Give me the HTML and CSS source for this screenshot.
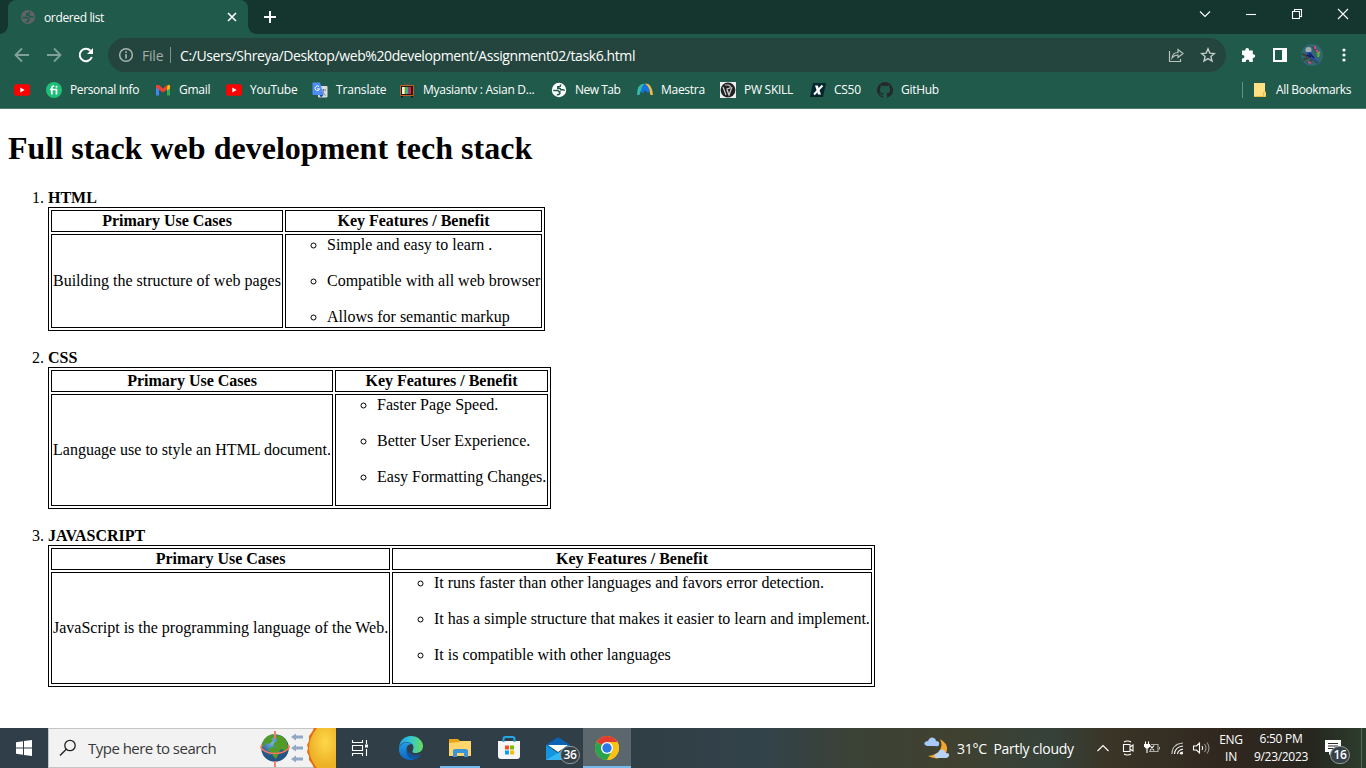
FILE: index.html
```html
<!DOCTYPE html>
<html lang="en">
<head>
<meta charset="utf-8">
<title>ordered list</title>
<link rel="stylesheet" href="styles.css">
</head>
<body>
<div class="screen">
<header class="tabs">
  <div class="tab">
    <svg class="globe" width="14" height="14" viewBox="0 0 14 14"><circle cx="7" cy="7" r="7" fill="#5f6368"/><path d="M1.200 7.500h4q1.800 0 1.800 1.300h.8v2q-1 1.200-3 1M8.500 1.500v1.300q0 1-1.500 1H5.800v1.800h2q1 0 1 1.200h2.500q1 0 1 1" fill="none" stroke="#205a4b" stroke-width="1.500"/></svg>
    <span class="tab-title">ordered list</span>
    <svg class="tab-close" width="10" height="10" viewBox="0 0 10 10"><path d="M1 1l8 8M9 1l-8 8" stroke="#fff" stroke-width="1.6"/></svg>
  </div>
  <svg class="plus" width="12" height="12" viewBox="0 0 12 12"><path d="M6 0v12M0 6h12" stroke="#fff" stroke-width="2"/></svg>
  <div class="window-buttons">
    <svg width="12" height="12" viewBox="0 0 12 12"><path d="M1 3.500l5 5 5-5"/></svg>
    <svg width="12" height="12" viewBox="0 0 12 12"><path d="M1 6.500h10"/></svg>
    <svg width="12" height="12" viewBox="0 0 12 12"><path d="M1.500 3.500h7v7h-7zM3.500 3.500v-2h7v7h-2"/></svg>
    <svg width="12" height="12" viewBox="0 0 12 12"><path d="M1 1l10 10M11 1L1 11"/></svg>
  </div>
</header>
<nav class="toolbar">
  <svg class="arrow" width="16" height="16" viewBox="0 0 16 16"><path d="M15 8H2M8 1.500L1.500 8 8 14.500"/></svg>
  <svg class="arrow" width="16" height="16" viewBox="0 0 16 16"><path d="M1 8h13M8 1.500L14.500 8 8 14.500"/></svg>
  <svg class="reload" width="16" height="16" viewBox="0 0 16 16"><path d="M13.800 10A6.200 6.200 0 1 1 12.500 3.700" fill="none" stroke="#fff" stroke-width="2"/><path d="M15 1v6H9z" fill="#fff"/></svg>
  <div class="address">
    <svg width="16" height="16" viewBox="0 0 16 16"><circle cx="8" cy="8" r="6.300" fill="none" stroke="#a9b6b1" stroke-width="1.500"/><path d="M8 7v4.500M8 4.200v1.700" stroke="#a9b6b1" stroke-width="1.600"/></svg>
    <span class="scheme">File</span><span class="bar"></span><span class="url">C:/Users/Shreya/Desktop/web%20development/Assignment02/task6.html</span>
    <svg class="share" width="16" height="16" viewBox="0 0 16 16"><path d="M1.500 4v10.500h11V12M4 11c.5-4 3-5.500 6-5.500V2.500L15 6.500 10 10.500V8C7 8 5.500 9 4 11z" fill="none" stroke="#b8c2be" stroke-width="1.200"/></svg>
    <svg class="star" width="16" height="16" viewBox="0 0 16 16"><path d="M8 1.800l1.800 4.300 4.600.4-3.500 3 1.100 4.500L8 11.600 4 14l1.100-4.500-3.500-3 4.600-.4z" fill="none" stroke="#c4ccc9" stroke-width="1.400"/></svg>
  </div>
  <svg class="puzzle" width="16" height="16" viewBox="0 0 16 16"><path fill="#fff" d="M2 3.500h3.300V2.800a1.900 1.900 0 0 1 3.800 0v.7h3.700v3.800h.6a1.800 1.800 0 0 1 0 3.600h-.6V15H9.300v-.8a1.700 1.700 0 0 0-3.500 0v.8H2v-3.600h.7a1.700 1.700 0 0 0 0-3.500H2z"/></svg>
  <svg class="panel" width="14" height="14" viewBox="0 0 14 14"><path fill="#fff" fill-rule="evenodd" d="M0 0h14v14H0zM2 2v10h7V2z"/></svg>
  <svg class="avatar" width="22" height="22" viewBox="0 0 22 22"><circle cx="11" cy="11" r="11" fill="#30686e"/><path d="M2 16l6-3 5 3 4 3M12 3l4 5M1 10l5 2M6 19l5-3" stroke="#3b4237" stroke-width="2" fill="none"/><circle cx="7.500" cy="6" r="3" fill="#a4adad"/><path d="M5 8l5 0 4 6 6 6-9-5-5-3z" fill="#2b51b5"/><path d="M8 9l5 5M6 11l4 2" stroke="#101a58" stroke-width="1.500"/><path d="M14 2v3M15 6l2 2M7 18l3 1" stroke="#c74e8a" stroke-width="2"/><path d="M16 10l3-2M17 13l1-3" stroke="#72a63e" stroke-width="2"/></svg>
  <svg class="dots" width="4" height="14" viewBox="0 0 4 14"><g fill="#fff"><circle cx="2" cy="2" r="1.600"/><circle cx="2" cy="7" r="1.600"/><circle cx="2" cy="12" r="1.600"/></g></svg>
</nav>
<nav class="bookmarks">
  <span class="mark"><svg width="16" height="16" viewBox="0 0 16 16"><rect y="2.300" width="16" height="11.400" rx="2.500" fill="#f00"/><path d="M6.300 5.500v5l4.300-2.500z" fill="#fff"/></svg></span>
  <span class="mark"><svg width="16" height="16" viewBox="0 0 16 16"><circle cx="8" cy="8" r="8" fill="#1fbf77"/><path d="M5.800 12.500V6q0-2 2.400-2M4 7.500h6.500v5" fill="none" stroke="#fff" stroke-width="1.700"/><circle cx="10.500" cy="4.700" r="1" fill="#fff"/></svg><b class="personal">Personal Info</b></span>
  <span class="mark"><svg width="16" height="16" viewBox="0 0 16 16"><path d="M1 4v9.500h3V7z" fill="#4285f4"/><path d="M12 7v6.500h3V4z" fill="#34a853"/><path d="M1 3l3 0 4 3.500L12 3l1.500 0v3.500L8 10.500 1 5.500z" fill="#ea4335"/><path d="M12 4.500L14 2.500l1 1v3l-3 2z" fill="#fbbc04"/></svg><b>Gmail</b></span>
  <span class="mark"><svg width="16" height="16" viewBox="0 0 16 16"><rect y="2.300" width="16" height="11.400" rx="2.500" fill="#f00"/><path d="M6.300 5.500v5l4.300-2.500z" fill="#fff"/></svg><b>YouTube</b></span>
  <span class="mark"><svg width="16" height="16" viewBox="0 0 16 16"><rect x="6" y="4" width="9.500" height="11.500" rx="1" fill="#d9dcdf"/><path d="M9 8h5M11.500 7v1q0 3-2.500 5M10 9.500l3.500 4" fill="none" stroke="#6b7f94"/><path d="M1 .5h7L11.500 13H1.500Q.5 13 .5 12V1.500Q.5.500 1 .5z" fill="#4e8df5"/><path d="M7 4.600a2.300 2.300 0 1 0 .6 2.200H5.200" fill="none" stroke="#fff"/><path d="M7.500 13h4L9 15.500z" fill="#174ea6"/></svg><b class="wide">Translate</b></span>
  <span class="mark"><svg width="16" height="16" viewBox="0 0 16 16"><path d="M5 0l3 3 3-3" fill="none" stroke="#555"/><rect x="1" y="3" width="14" height="11" fill="#2b1510"/><path d="M1.500 3.500h13v10h-13z" fill="none" stroke="#c5622a"/><path d="M3 5h2v7H3z" fill="#f3f3ea"/><path d="M5 5h1.500v7H5z" fill="#f2dc32"/><path d="M6.500 5H8v7H6.500z" fill="#29b6c6"/><path d="M8 5h1.300v7H8z" fill="#43b836"/><path d="M9.300 5h1.400v7H9.300z" fill="#d034bd"/><path d="M10.700 5H12v7h-1.300z" fill="#df2a26"/><path d="M2 14h2v1.500H2zM12 14h2v1.500h-2z" fill="#21100c"/></svg><b>Myasiantv : Asian D...</b></span>
  <span class="mark"><svg width="16" height="16" viewBox="0 0 16 16"><g transform="translate(1 1)"><circle cx="7" cy="7" r="7.200" fill="#fff"/><path d="M1.200 7.500h4q1.800 0 1.800 1.300h.8v2q-1 1.200-3 1M8.500 1.500v1.300q0 1-1.500 1H5.800v1.800h2q1 0 1 1.200h2.500q1 0 1 1" fill="none" stroke="#205a4b" stroke-width="1.500"/></g></svg><b class="newtab">New Tab</b></span>
  <span class="mark"><svg width="16" height="16" viewBox="0 0 16 16"><path d="M0 13Q0 2 7 1.500L8.500 4Q4 6 2.500 13z" fill="#35b8a6"/><path d="M8.500 1.500Q15 1 16 13h-2.500Q12 6 8 4z" fill="#f7b942"/><path d="M4 9Q5 3 8 2q3 1 5 7-2 3-3 1L8 8l-2 3q-2 0-2-2z" fill="#1473e6"/></svg><b>Maestra</b></span>
  <span class="mark"><svg width="16" height="16" viewBox="0 0 16 16"><path d="M0 0h16v16H0z" fill="#eee"/><circle cx="8" cy="8" r="7.400" fill="#222"/><path d="M5 3h3q3 0 2 3L7 7l2 6M3 5l3 8M7 8l2 5 3-8" fill="none" stroke="#ccc" stroke-width="1.200"/></svg><b>PW SKILL</b></span>
  <span class="mark"><svg width="16" height="16" viewBox="0 0 16 16"><path d="M3 1h13l-3 14H0z" fill="#02262b"/><path d="M5 3.500h2.800l3.200 9H8z" fill="#fff"/><path d="M12.500 3.500L4 12.500" stroke="#fff" stroke-width="2"/></svg><b>CS50</b></span>
  <span class="mark"><svg width="16" height="16" viewBox="0 0 16 16"><path fill="#24292e" d="M8 0a8 8 0 0 0-2.530 15.590c.4.070.55-.17.55-.38v-1.490c-2.010.37-2.530-.49-2.690-.94-.09-.23-.48-.94-.82-1.130-.28-.15-.68-.52-.01-.53.63-.01 1.080.58 1.230.82.72 1.210 1.870.87 2.330.66.070-.52.280-.87.510-1.070-1.780-.2-3.640-.89-3.640-3.950 0-.87.310-1.590.82-2.150-.08-.2-.36-1.020.08-2.120 0 0 .67-.21 2.200.82a7.600 7.600 0 0 1 4 0c1.530-1.040 2.200-.82 2.200-.82.44 1.100.16 1.920.08 2.120.51.560.82 1.270.82 2.150 0 3.070-1.870 3.750-3.650 3.950.29.250.54.730.54 1.480v2.200c0 .21.150.46.550.38A8 8 0 0 0 8 0z"/></svg><b>GitHub</b></span>
  <span class="mark all"><svg width="12" height="16" viewBox="0 0 12 16"><path d="M0 1h11v9h1v5H0z" fill="#ffe082"/><path d="M0 14.500h12V10H9.500v4" fill="none" stroke="#e8bd42"/></svg><b class="personal">All Bookmarks</b></span>
</nav>
<main class="page">
  <h1>Full stack web development tech stack</h1>
  <ol>
    <li><b>HTML</b>
      <table class="html"><tr><th>Primary Use Cases</th><th>Key Features / Benefit</th></tr>
      <tr><td>Building the structure of web pages</td><td><ul><li>Simple and easy to learn .</li><li>Compatible with all web browser</li><li>Allows for semantic markup</li></ul></td></tr></table>
    </li>
    <li><b>CSS</b>
      <table class="css"><tr><th>Primary Use Cases</th><th>Key Features / Benefit</th></tr>
      <tr><td>Language use to style an HTML document.</td><td><ul><li>Faster Page Speed.</li><li>Better User Experience.</li><li>Easy Formatting Changes.</li></ul></td></tr></table>
    </li>
    <li><b>JAVASCRIPT</b>
      <table class="js"><tr><th>Primary Use Cases</th><th>Key Features / Benefit</th></tr>
      <tr><td>JavaScript is the programming language of the Web.</td><td><ul><li>It runs faster than other languages and favors error detection.</li><li>It has a simple structure that makes it easier to learn and implement.</li><li>It is compatible with other languages</li></ul></td></tr></table>
    </li>
  </ol>
</main>
<footer class="taskbar">
  <div class="start"><svg width="16" height="16" viewBox="0 0 16 16"><path fill="#fff" d="M0 2.200l7-1V7.500H0zM8 1l8-1v7.500H8zM0 8.500h7v6.300l-7-1zM8 8.500h8V16l-8-1z"/></svg></div>
  <div class="search">
    <svg class="glass" width="18" height="18" viewBox="0 0 18 18"><circle cx="11" cy="6.500" r="5.200" fill="none" stroke="#222" stroke-width="1.300"/><path d="M7.300 10.200L1 16.500" stroke="#222" stroke-width="1.400"/></svg>
    <span>Type here to search</span>
    <svg class="art" width="78" height="40" viewBox="0 0 78 40"><defs><radialGradient id="sun" cx=".6" cy=".35" r=".6"><stop offset="0" stop-color="#ffd84a"/><stop offset="1" stop-color="#edb126"/></radialGradient><radialGradient id="sea" cx=".4" cy=".3"><stop stop-color="#75b6e8"/><stop offset="1" stop-color="#245483"/></radialGradient></defs><circle cx="17" cy="20" r="13.800" fill="url(#sea)"/><path d="M5 14q3-7 10-8l1 3-3 2 2 2-4 3-3-1-2 3-2 1zM18 7q8 0 11 7l1 6-3 4-3-3-3 1-3-4-3 1 1-4 4-3-2-2zM11 20l6-1 5 2-1 4-3 6-3-3v-3l-4-2z" fill="#529b25"/><path d="M17 3v8M17 33v6" stroke="#ff7659" stroke-width="1.800"/><path d="M4 17q-2 3 0 4 5 4.500 13 4.500T30 21q2-2 0-4" fill="none" stroke="#ff7659" stroke-width="1.600"/><path d="M33 9l5-3.500V7.500h7v3h-7v2zM33 20l5-3.500v2h7v3h-7v2zM33 31l5-3.500v2h7v3h-7v2z" fill="#91a8c5"/><path d="M56 0l-2 4-3 4v5l-2 4 1 3-1 4 2 4v4l3 4 2 4h10V0z" fill="#e46e12"/><path d="M59 0q-16 20 0 40h19V0z" fill="url(#sun)"/></svg>
  </div>
  <div class="apps">
    <div class="app taskview"><svg width="18" height="16" viewBox="0 0 18 16"><path d="M1.500 0v2.500h10V0M1.500 16v-2.500h10V16M1.500 5.500h10v5h-10zM15.500 0v4M15.500 9v7" fill="none" stroke="#fff" stroke-width="1.100"/><path d="M14 4.500h3v3h-3z" fill="#fff"/></svg></div>
    <div class="app"><svg width="24" height="24" viewBox="0 0 24 24"><defs><linearGradient id="e1" x1="0" x2="1"><stop stop-color="#219be7"/><stop offset=".5" stop-color="#35c9cf"/><stop offset="1" stop-color="#6bdc56"/></linearGradient><linearGradient id="e2" x1="0" y1="0" x2="0" y2="1"><stop stop-color="#239eea"/><stop offset="1" stop-color="#0b65be"/></linearGradient></defs><path d="M0 13C0 5 5 0 12 0s12 5 12 10-4 7-7 7c-4 0-4-1-3-3 2-5-2-8-6-8-4 0-8 3-8 7z" fill="url(#e1)"/><path d="M0 12c2-5 9-7 13-4-5 0-6 4-5 8 2 5 9 6 14 2-5 9-18 7-21 0-1-2-1-4-1-6z" fill="url(#e2)"/><path d="M8 13c-2 6 2 10 8 10 3-1 5-3 6-5-6 3-13 0-14-5z" fill="#14539c"/></svg></div>
    <div class="app open"><svg width="22" height="20" viewBox="0 0 22 20"><path d="M0 1h9l2 2h10v15H0z" fill="#e9a514"/><path d="M0 5l10-1 1-1h11v15H0z" fill="#ffd66b"/><path d="M4 19v-7l2-1h11l2 1v7h-4v-4H8v4z" fill="#3a95d9"/></svg></div>
    <div class="app"><svg width="24" height="24" viewBox="0 0 24 24"><path d="M1 5h22v15q0 3-3 3H4q-3 0-3-3z" fill="#f6f6f6"/><path d="M6.500 6V3q0-2 2-2h7q2 0 2 2v3" fill="none" stroke="#25a6e8" stroke-width="2"/><path d="M8 9.500h4v4H8z" fill="#f25022"/><path d="M13 9.500h4v4h-4z" fill="#7fba00"/><path d="M8 14.500h4v4H8z" fill="#00a4ef"/><path d="M13 14.500h4v4h-4z" fill="#ffb900"/></svg></div>
    <div class="app"><svg class="mail" width="24" height="23" viewBox="0 0 24 23"><path d="M0 8l12-8 12 8v4H0z" fill="#0b63b5"/><path d="M0 8l12 8 12-8v15H0z" fill="#1495df"/><path d="M0 23l24-14v14z" fill="#35b5f1"/><path d="M2 8h20l-10 7z" fill="#fff"/></svg><i class="badge">36</i></div>
    <div class="app active"><svg width="24" height="24" viewBox="0 0 24 24"><circle cx="12" cy="12" r="12" fill="#fbc116"/><path d="M12 12L1.600 6A12 12 0 0 1 22.400 6z" fill="#e33b2e"/><path d="M1.600 6A12 12 0 0 0 12 24l5.200-9L12 12z" fill="#2ba24c"/><path d="M12 6h10.400A12 12 0 0 1 12 24l5-9z" fill="#fbc116"/><circle cx="12" cy="12" r="6" fill="#fff"/><circle cx="12" cy="12" r="4.700" fill="#2b78e8"/></svg></div>
  </div>
  <div class="weather"><svg width="26" height="24" viewBox="0 0 26 24"><path d="M16 3q10 6 6 14-6 9-18 3 9-1 12-6 3-5 0-11z" fill="#f5a52b"/><path d="M3 10q-4-1-2-4 2-1 3-1 2-5 6-3 2 1 2 3 4 0 3 4-1 2-4 1z" fill="#a9c8f7"/><path d="M13 22q-4-1-2-4l3-1q2-5 6-3l2 3q4 0 3 3-1 2-3 2z" fill="#b8d2fa"/></svg><span>31°C&nbsp; Partly cloudy</span></div>
  <div class="tray">
    <svg width="12" height="16" viewBox="0 0 12 16"><path d="M.5 11L6 5.500 11.500 11" class="line"/></svg>
    <svg width="12" height="16" viewBox="0 0 12 16"><path d="M1.500 4.500h6.500v7H1.500zM8 7l3-2v6L8 9M2 2q3.500-2 7 0M2 14q3.500 2 7 0" class="line"/></svg>
    <svg width="16" height="16" viewBox="0 0 16 16"><path d="M1.500 1.500v3M4.500 1.500v3M3 8v5M6 5.500l4 5M10 5.500l-4 5" class="line"/><path d="M0 4h6v2.500L4 8.500H2L0 6.500z" fill="#fff"/><path d="M7 4.500h7v7H5M15.500 7v2.500" class="line" opacity=".6"/></svg>
    <svg width="14" height="16" viewBox="0 0 14 16"><g class="line"><path d="M2 14Q2 4 13 3" opacity=".7"/><path d="M4.500 14Q5 7 13 6M7.500 14Q8 10 13 9M10 14q1-2 3-2"/></g><circle cx="11.500" cy="13.300" r="1.300" fill="#fff"/></svg>
    <svg width="18" height="16" viewBox="0 0 18 16"><path d="M1.500 6h3l3-3v10l-3-3h-3zM10 6q1.500 2 0 4" class="line"/><path d="M12.500 4q3 4 0 8M15 2.500q4 5.500 0 11" class="line" opacity=".5"/></svg>
  </div>
  <div class="lang"><span>ENG</span><span>IN</span></div>
  <div class="clock"><span class="time">6:50 PM</span><span>9/23/2023</span></div>
  <div class="note"><svg width="16" height="15" viewBox="0 0 16 15"><path fill="#fff" d="M0 0h16v12H8l-4 3v-3H0z"/><path d="M3 3.500h10M3 6h10M3 8.500h7" stroke="#2b2c25"/></svg><i class="badge">16</i></div>
</footer>
</div>
</body>
</html>
```
FILE: styles.css
```css
* { box-sizing: border-box; }
body { margin: 0; }
.screen { width: 1366px; height: 768px; display: flex; flex-direction: column; overflow: hidden; background: #fff; font-family: "Open Sans", sans-serif; font-size: 12px; color: #fff; white-space: nowrap; }
svg { display: block; flex: none; }
.tabs { height: 34px; flex: none; display: flex; padding-left: 8px; background: radial-gradient(circle at 8px 0, transparent 7.5px, #205a4b 8px) 248px 26px / 8px 8px no-repeat, radial-gradient(circle at 0 0, transparent 7.5px, #205a4b 8px) 0 26px / 8px 8px no-repeat, #15362f; }
.tab { width: 240px; height: 34px; border-radius: 8px 8px 0 0; background: #205a4b; display: flex; align-items: center; padding: 0 11px 0 13px; }
.tab-title { margin-left: 9px; flex: 1; letter-spacing: -.36px; }
.plus { margin: 11px 0 0 16px; }
.window-buttons { margin-left: auto; display: flex; gap: 34px; padding: 8px 17px 0 0; }
.window-buttons path, .line { fill: none; stroke: #fff; stroke-width: 1.1; }
.toolbar { height: 42px; flex: none; background: #205a4b; display: flex; align-items: center; padding-left: 14px; }
.arrow { margin-right: 16px; }
.arrow path { fill: none; stroke: #80a198; stroke-width: 1.8; }
.address { width: 1118px; height: 34px; border-radius: 17px; margin-left: 14px; background: #23453d; display: flex; align-items: center; padding: 0 10px; font-size: 14px; }
.scheme { color: #a4aeaa; width: 28px; margin-left: 8px; letter-spacing: -.2px; }
.bar { width: 1px; height: 16px; background: #80938b; }
.url { margin-left: 9px; letter-spacing: -.4px; }
.share { margin-left: auto; }
.star { margin-left: 16px; }
.puzzle { margin-left: 14px; }
.panel { margin-left: 17px; }
.avatar { margin-left: 14px; }
.dots { margin-left: 19px; }
.bookmarks { height: 33px; flex: none; background: #205a4b; border-bottom: 1px solid #4d7b6f; display: grid; grid-template-columns: 32px 109px 71px 86px 87px 152px 86px 83px 90px 67px 1fr 124px; padding: 0 0 5px 14px; }
.mark { display: flex; align-items: center; gap: 8px; }
.mark b { font-weight: 400; letter-spacing: -.28px; }
.mark .personal { letter-spacing: -.37px; }
.mark .wide { letter-spacing: -.17px; }
.mark .newtab { letter-spacing: -.5px; }
.all { border-left: 1px solid #668f84; height: 16px; align-self: center; padding-left: 11px; gap: 10px; }
.page { flex: 1; min-height: 0; padding: 0 8px; overflow: hidden; font: 16px/18px "Liberation Serif", serif; color: #000; }
h1 { font-size: 32px; line-height: 37px; margin: 21px 0 22px; letter-spacing: .02px; }
ol { margin: 0; padding-left: 40px; }
ol > li { height: 160px; }
ol > li:nth-child(2) { height: 178px; }
table { border: 1px solid #000; border-spacing: 2px; table-layout: fixed; }
th, td { border: 1px solid #000; padding: 1px; height: 22px; }
td { height: 112px; }
.html td { height: 94px; }
.html { width: 497px; }
.css { width: 503px; }
.js { width: 827px; }
.html th:first-child { width: 232px; }
.css th:first-child { width: 282px; }
.js th:first-child { width: 339px; }
td ul { margin: 0; padding-left: 40px; list-style: circle; height: 90px; }
.css ul, .js ul { height: 108px; }
td li { height: 36px; }
.taskbar { height: 40px; flex: none; display: flex; background: linear-gradient(90deg, #2f3e49 0, #303e46 48%, #33434a 56%, #3b4237 62%, #404130 70%, #354139 77%, #3a3527 81%, #30271f 90%, #26261f 96%, #2c3e2d 100%); }
.start { width: 48px; display: grid; place-items: center; }
.search { width: 288px; background: #f2f2f2; border: 1px solid #c5c5c5; border-width: 1px 0 1px 1px; color: #383838; font-size: 15px; display: flex; align-items: center; padding-left: 10px; }
.search span { margin-left: 11px; letter-spacing: -.52px; }
.art { margin-left: auto; }
.apps { display: flex; margin-right: 293px; }
.app { width: 48px; height: 40px; display: grid; place-items: center; position: relative; margin-left: 1px; }
.taskview { margin: 0 2px 0 0; }
.open { border-bottom: 2px solid #76b9ed; width: 40px; margin: 0 4px 0 5px; padding-top: 2px; }
.active { background: #5c676d; border-bottom: 2px solid #76b9ed; padding-top: 2px; }
.badge { position: absolute; width: 20px; height: 18px; border-radius: 9px; background: #354047; border: 1px solid #929999; font: 600 12px/15px "Open Sans", sans-serif; text-align: center; right: 2px; bottom: 4px; letter-spacing: -.3px; }
.weather { display: flex; align-items: center; font-size: 14px; gap: 7px; }
.weather span { letter-spacing: -.28px; }
.tray { display: flex; align-items: center; gap: 10px; margin-left: auto; }
.tray svg:nth-child(1) { margin-right: 3px; }
.tray svg:nth-child(4) { margin-right: -2px; }
.lang, .clock { display: flex; flex-direction: column; text-align: center; line-height: 17px; padding-top: 3px; letter-spacing: -.3px; }
.clock { width: 60px; margin-left: 5px; padding-top: 2px; }
.clock .time { line-height: 18px; }
.lang { width: 30px; margin-left: 6px; }
.note { width: 51px; padding: 12px 0 0 14px; position: relative; border-right: 1px solid #59675b; margin-right: 4px; }
.note .badge { right: 11px; }
```
